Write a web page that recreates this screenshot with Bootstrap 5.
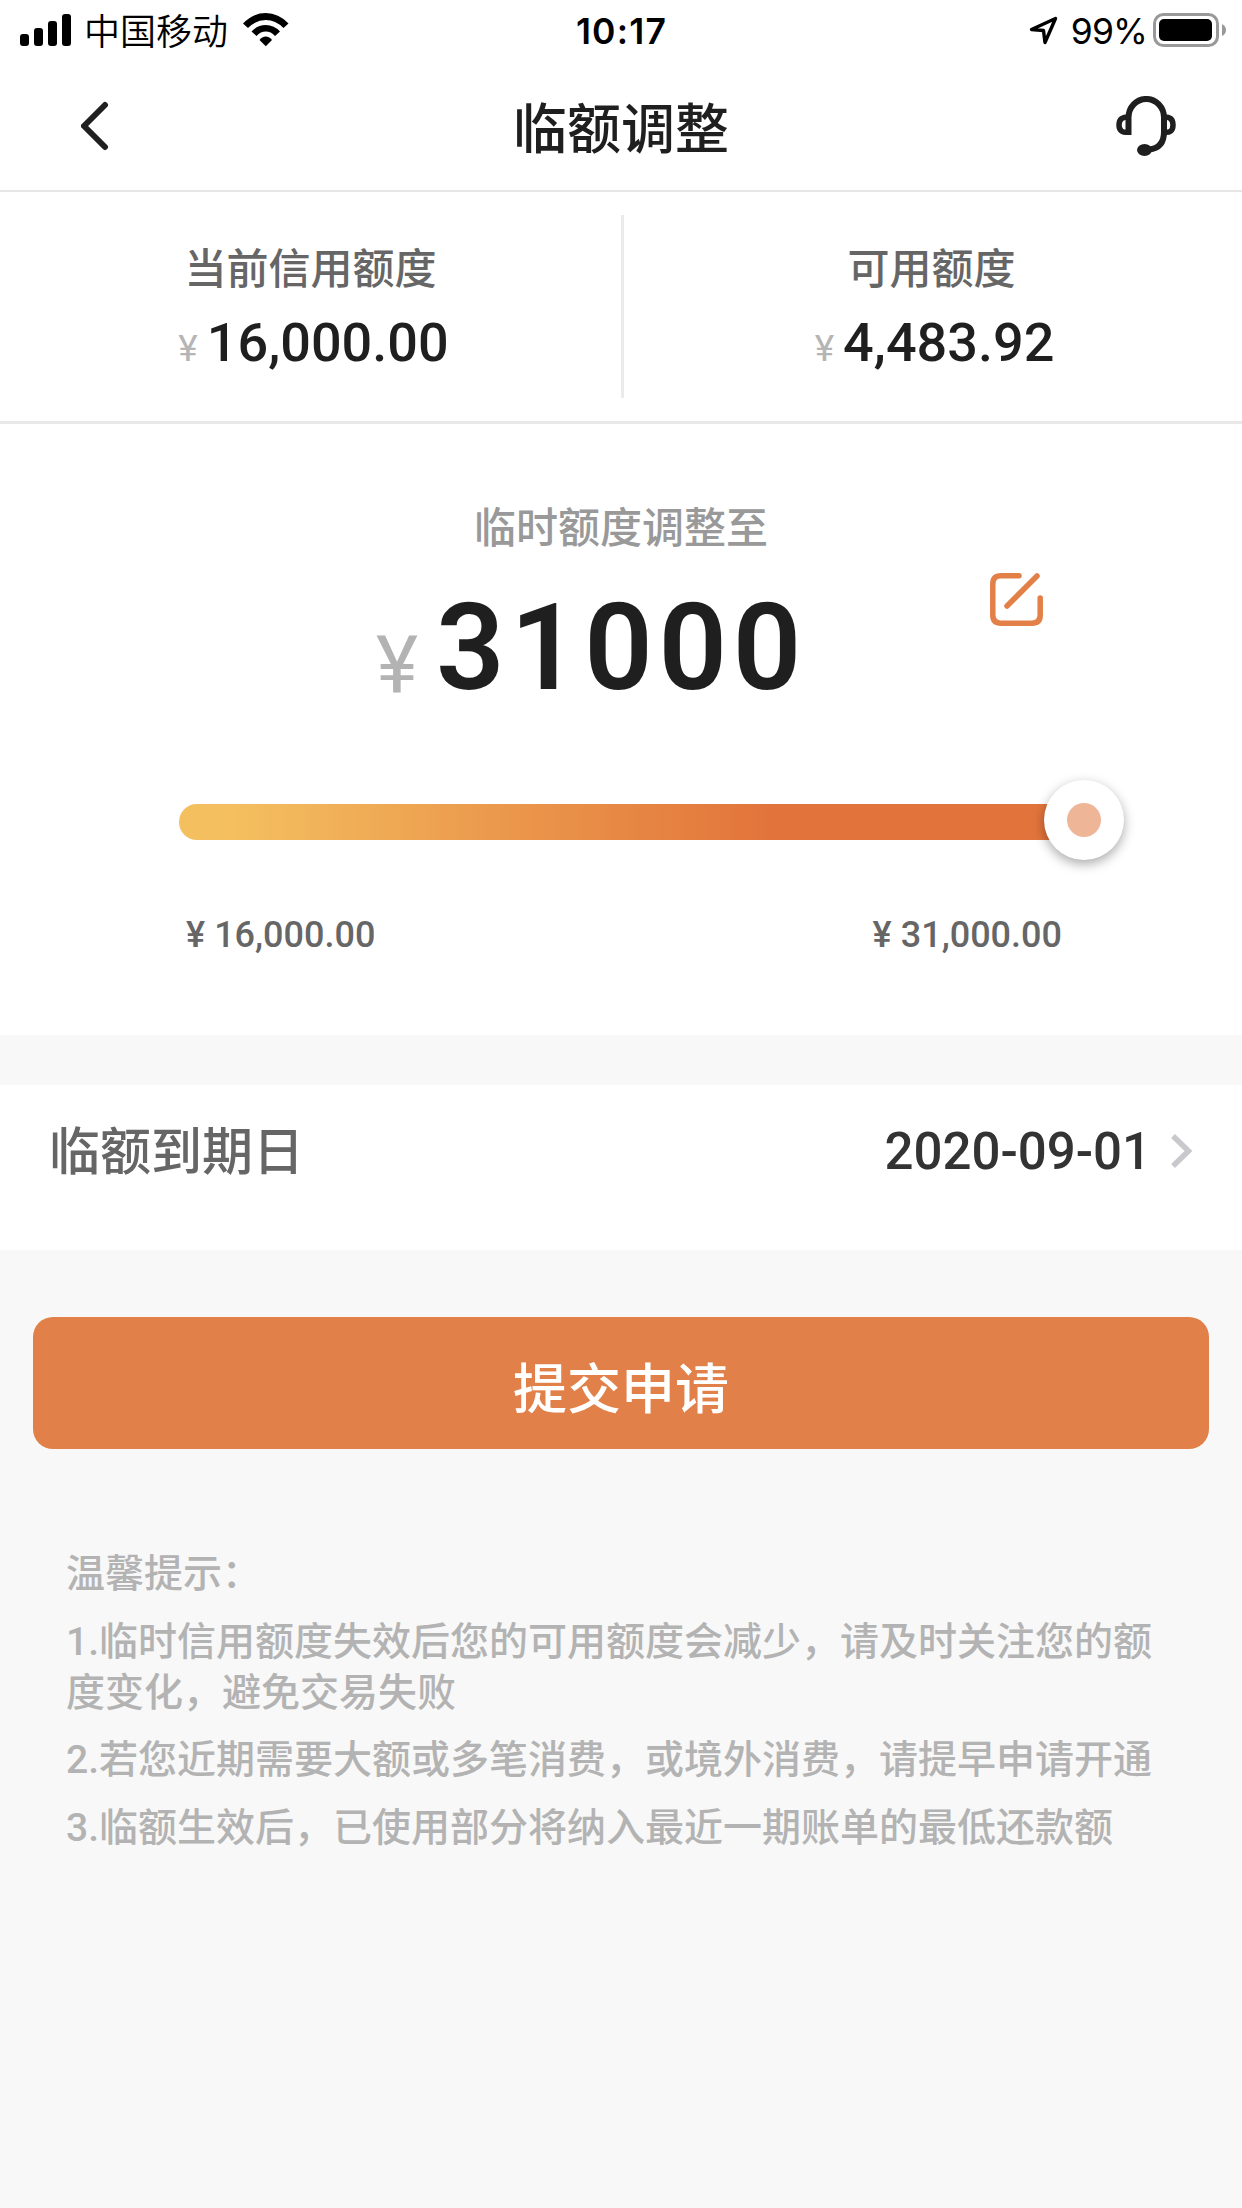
<!DOCTYPE html>
<html lang="zh-CN">
<head>
<meta charset="utf-8">
<meta name="viewport" content="width=device-width, initial-scale=1">
<title>临额调整</title>
<link rel="stylesheet" href="https://cdn.jsdelivr.net/npm/bootstrap@5.3.0/dist/css/bootstrap.min.css">
<style>
body{font-family:Roboto,"Noto Sans CJK SC",sans-serif;background:#f8f8f8;color:#1f1f1f;min-height:2208px;overflow-x:hidden}
svg{display:block;flex:none}
.status-bar{height:62px;padding:13px 16px 0 20px;color:#000;font-family:Inter,"Noto Sans CJK SC",sans-serif;line-height:36px}
.status-side{flex:1 1 0}
.carrier{font-family:"Noto Sans CJK SC",sans-serif;font-size:36px;margin:-2px 15px 0 12px;font-weight:350;line-height:36px}
.clock{font-size:35.5px;font-weight:600;letter-spacing:1.2px;padding:1px 3px 0 0}
.percent{font-size:35.5px;letter-spacing:-.9px;margin:1px 6px 0 13px}
.title-bar{height:130px;padding:0 66px 0 81px;border-bottom:2px solid #e6e6e6}
.page-title{font-size:54px;font-weight:500;line-height:60px;padding:9px 15px 0 0}
.limits{height:232px;border-bottom:3px solid #e9e9e9;padding:23px 0}
.limit-col{padding-top:25px}
.limit-col+.limit-col{border-left:3px solid #ebebeb;padding-right:3px}
.limit-name{font-size:42px;line-height:60px;color:#666;font-weight:500}
.limit-value{font-size:54px;line-height:66px;margin-top:10px;font-weight:500;padding-left:6px}
.limit-value .yen{font-size:37px;color:#b5b5b5;font-weight:400;margin-right:9px}
.adjust{height:611px;padding-top:75px}
.adjust-name{font-size:42px;line-height:60px;color:#999;font-weight:500}
.amount-row{margin-top:14px;padding:0 199px 0 376px}
.amount{font-size:120px;line-height:130px;font-weight:600;letter-spacing:5.600px;margin-top:10px}
.amount .yen{font-size:80px;font-weight:450;color:#b3b3b3;vertical-align:-4px;letter-spacing:0;line-height:1;margin-right:18px}
.slider{height:80px;margin:67px 118px 0 179px}
.slider-track{height:36px;margin-top:24px;width:910px;border-radius:18px;background:linear-gradient(90deg,#f4bf5f 6%,#eb994c 35%,#e2743b 65%)}
.slider-thumb{width:80px;height:80px;top:0;right:0;background:#fff;border-radius:50%;box-shadow:0 4px 12px rgba(0,0,0,.34)}
.slider-thumb span{width:34px;height:34px;border-radius:50%;background:#efb597}
.bounds{margin-top:50px;padding:0 180px 0 186px;font-size:36px;line-height:50px;color:#666;font-weight:500}
.bounds .yen{margin-right:9px}
.due{margin-top:50px;height:165px;padding:37px 49px 0 49px;font-size:51px;line-height:60px;font-weight:500}
.due-name{color:#666;padding-top:1px}
.due-date{color:#333}
.due svg{margin:12px 0 0 20px}
.btn-apply{--bs-btn-bg:#e28049;--bs-btn-color:#fff;--bs-btn-hover-bg:#d97740;--bs-btn-hover-color:#fff;--bs-btn-border-width:0;--bs-btn-border-radius:20px;--bs-btn-font-size:54px;--bs-btn-font-weight:500;height:132px;line-height:60px;padding:16px 0 0}
.apply{padding:67px 33px 0}
.tips{padding:100px 66px 0;font-size:39px;line-height:51px;color:#b3b3b3;font-weight:500}
.tips p{margin-bottom:16.6px}
</style>
<script src="https://cdn.jsdelivr.net/npm/bootstrap@5.3.0/dist/js/bootstrap.bundle.min.js"></script>
</head>
<body>
<header class="bg-white">
  <div class="status-bar d-flex align-items-start">
    <div class="status-side d-flex align-items-start">
      <svg width="52" height="34" viewBox="0 0 52 34"><rect y="21" width="9" height="12" rx="3"/><rect x="14" y="15" width="9" height="18" rx="3"/><rect x="28" y="8" width="9" height="25" rx="3"/><rect x="42" y="1" width="9" height="32" rx="3"/></svg>
      <span class="carrier">中国移动</span>
      <svg width="46" height="34" viewBox="0 0 46 34"><path d="M0 10.500Q10 0 22.800 0T45.500 10.500L40.500 15Q32.500 7 22.800 7T5 15Z"/><path d="M8.500 18.500Q14.500 12 22.800 12T37 18.500L32 23Q28 18.600 22.800 18.600T13.500 23Z"/><path d="M16.500 27Q19 23.400 22.800 23.400T29 27L22.800 33.300Z"/></svg>
    </div>
    <span class="clock">10:17</span>
    <div class="status-side d-flex align-items-start justify-content-end">
      <svg width="29" height="34" viewBox="0 0 29 34" fill="none" stroke="#000" stroke-width="3.400" stroke-linejoin="round"><path d="M2.500 16.500 26.500 5.500 16 29.500 14.500 17.500Z"/></svg>
      <span class="percent">99%</span>
      <svg width="73" height="34" viewBox="0 0 73 34"><rect x="1.500" y="1.500" width="63" height="31" rx="9" fill="none" stroke="#999" stroke-width="3"/><rect x="6" y="6" width="53" height="22" rx="5"/><path d="M69 11Q73 13 73 17T69 23Z" fill="#999"/></svg>
    </div>
  </div>
  <nav class="title-bar d-flex justify-content-between align-items-center">
    <svg width="60" height="50" viewBox="0 0 60 50" fill="none" stroke="#1f1f1f" stroke-width="6" stroke-linecap="round" stroke-linejoin="round"><path d="M24 4 3 25 24 46"/></svg>
    <h1 class="page-title mb-0">临额调整</h1>
    <svg width="60" height="60" viewBox="0 0 60 60" fill="none" stroke="#1f1f1f" stroke-width="6"><path d="M12.500 39V21.500A17.700 18.500 0 0 1 48 21.500V36Q48 52 33 53.500"/><path d="M14 21Q3 20 3 29T14 36M47 21Q57 20 57 29T47 36" stroke-width="5.500"/><ellipse cx="28.500" cy="54" rx="7.500" ry="6" fill="#1f1f1f" stroke="none"/></svg>
  </nav>
</header>
<main>
  <section class="limits bg-white d-flex text-center">
    <div class="limit-col w-50"><div class="limit-name">当前信用额度</div><div class="limit-value"><span class="yen">¥</span>16,000.00</div></div>
    <div class="limit-col w-50"><div class="limit-name">可用额度</div><div class="limit-value"><span class="yen">¥</span>4,483.92</div></div>
  </section>
  <section class="adjust bg-white">
    <div class="adjust-name text-center">临时额度调整至</div>
    <div class="amount-row d-flex justify-content-between align-items-start">
      <div class="amount"><span class="yen">¥</span>31000</div>
      <svg width="53" height="53" viewBox="0 0 53 53" fill="none" stroke="#e38048" stroke-width="5.500" stroke-linecap="round"><path d="M29 2.800H11Q2.800 2.800 2.800 11V42Q2.800 50.200 11 50.200H42Q50.200 50.200 50.200 42V25M17 33 47 3"/></svg>
    </div>
    <div class="slider position-relative d-flex align-items-start">
      <div class="slider-track"></div>
      <div class="slider-thumb position-absolute d-flex align-items-center justify-content-center"><span></span></div>
    </div>
    <div class="bounds d-flex justify-content-between">
      <div><span class="yen">¥</span>16,000.00</div>
      <div><span class="yen">¥</span>31,000.00</div>
    </div>
  </section>
  <section class="due bg-white d-flex align-items-start">
    <span class="due-name me-auto">临额到期日</span>
    <span class="due-date">2020-09-01</span>
    <svg width="22" height="34" viewBox="0 0 22 34" fill="none" stroke="#c8c8cd" stroke-width="5.500"><path d="M2 2 17.500 17 2 32"/></svg>
  </section>
  <div class="apply"><button type="button" class="btn btn-apply w-100">提交申请</button></div>
  <section class="tips">
    <p>温馨提示：</p>
    <p>1.临时信用额度失效后您的可用额度会减少，请及时关注您的额度变化，避免交易失败</p>
    <p>2.若您近期需要大额或多笔消费，或境外消费，请提早申请开通</p>
    <p>3.临额生效后，已使用部分将纳入最近一期账单的最低还款额</p>
  </section>
</main>
</body>
</html>
